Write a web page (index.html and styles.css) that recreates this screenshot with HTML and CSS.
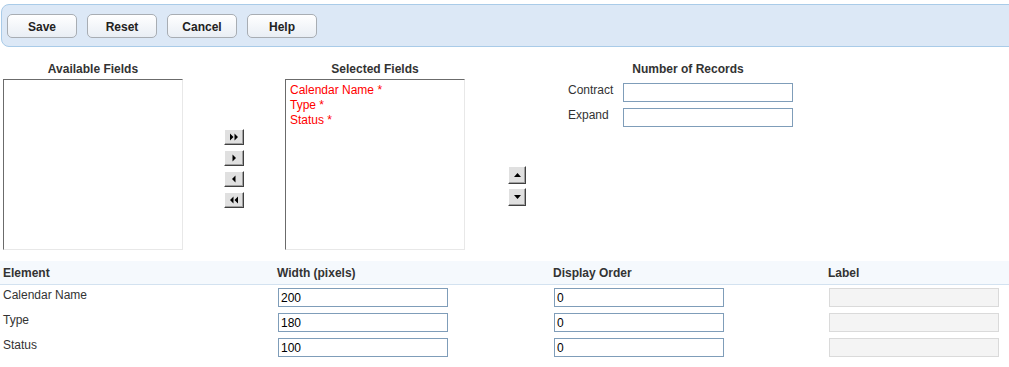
FILE: index.html
```html
<!DOCTYPE html>
<html>
<head>
  <meta charset="utf-8">
  <title>Field Layout</title>
  <link rel="stylesheet" href="styles.css">
</head>
<body>
  <div class="toolbar">
    <button class="tool-btn">Save</button>
    <button class="tool-btn">Reset</button>
    <button class="tool-btn">Cancel</button>
    <button class="tool-btn">Help</button>
  </div>

  <div class="picker">
    <div class="field-list">
      <div class="list-title">Available Fields</div>
      <div class="list-box"></div>
    </div>

    <div class="move-buttons">
      <button class="arrow-btn" title="Add all">
        <svg width="10" height="8" viewBox="0 0 10 8"><path d="M1 0.5 L4.5 4 L1 7.5 Z M5.5 0.5 L9 4 L5.5 7.5 Z" fill="#000"/></svg>
      </button>
      <button class="arrow-btn" title="Add">
        <svg width="10" height="8" viewBox="0 0 10 8"><path d="M3.5 0.5 L7 4 L3.5 7.5 Z" fill="#000"/></svg>
      </button>
      <button class="arrow-btn" title="Remove">
        <svg width="10" height="8" viewBox="0 0 10 8"><path d="M6.5 0.5 L3 4 L6.5 7.5 Z" fill="#000"/></svg>
      </button>
      <button class="arrow-btn" title="Remove all">
        <svg width="10" height="8" viewBox="0 0 10 8"><path d="M4.5 0.5 L1 4 L4.5 7.5 Z M9 0.5 L5.5 4 L9 7.5 Z" fill="#000"/></svg>
      </button>
    </div>

    <div class="field-list">
      <div class="list-title">Selected Fields</div>
      <div class="list-box selected">
        <div>Calendar Name *</div>
        <div>Type *</div>
        <div>Status *</div>
      </div>
    </div>

    <div class="order-buttons">
      <button class="order-btn" title="Up">
        <svg width="7" height="4" viewBox="0 0 7 4"><path d="M0 4 L3.5 0 L7 4 Z" fill="#000"/></svg>
      </button>
      <button class="order-btn" title="Down">
        <svg width="7" height="4" viewBox="0 0 7 4"><path d="M0 0 L3.5 4 L7 0 Z" fill="#000"/></svg>
      </button>
    </div>

    <div class="records">
      <div class="list-title">Number of Records</div>
      <div class="record-row">
        <span class="record-label">Contract</span>
        <input class="text-input" type="text">
      </div>
      <div class="record-row">
        <span class="record-label">Expand</span>
        <input class="text-input" type="text">
      </div>
    </div>
  </div>

  <table class="layout-table">
    <colgroup>
      <col class="col-element">
      <col class="col-width">
      <col class="col-order">
      <col>
    </colgroup>
    <thead>
      <tr>
        <th>Element</th>
        <th>Width (pixels)</th>
        <th>Display Order</th>
        <th>Label</th>
      </tr>
    </thead>
    <tbody>
      <tr>
        <td class="name">Calendar Name</td>
        <td><input class="text-input" type="text" value="200"></td>
        <td><input class="text-input" type="text" value="0"></td>
        <td><input class="text-input" type="text" disabled></td>
      </tr>
      <tr>
        <td class="name">Type</td>
        <td><input class="text-input" type="text" value="180"></td>
        <td><input class="text-input" type="text" value="0"></td>
        <td><input class="text-input" type="text" disabled></td>
      </tr>
      <tr>
        <td class="name">Status</td>
        <td><input class="text-input" type="text" value="100"></td>
        <td><input class="text-input" type="text" value="0"></td>
        <td><input class="text-input" type="text" disabled></td>
      </tr>
    </tbody>
  </table>
</body>
</html>
```

FILE: styles.css
```css
body {
  margin: 0;
  font-family: "Liberation Sans", Arial, sans-serif;
  font-size: 12px;
  color: #333;
  background: #fff;
  overflow: hidden;
}

/* top button bar */
.toolbar {
  display: flex;
  gap: 10px;
  height: 43px;
  box-sizing: border-box;
  margin: 4px -12px 0 1px;
  padding: 9px 0 0 5px;
  background: #dce8f6;
  border: 1px solid #a9cbe8;
  border-radius: 8px 0 0 8px;
}

.tool-btn {
  width: 70px;
  height: 24px;
  padding: 1px 0 0;
  font-family: inherit;
  font-size: 12px;
  font-weight: bold;
  color: #222;
  background: linear-gradient(#ffffff, #e9eef4);
  border: 1px solid #a8adb3;
  border-radius: 5px;
}

/* field picker */
.picker {
  display: flex;
  align-items: flex-start;
  margin: 14px 0 0 3px;
}

.list-title {
  height: 16px;
  line-height: 16px;
  margin-bottom: 2px;
  font-weight: bold;
  text-align: center;
  color: #333;
}

.list-box {
  width: 180px;
  height: 171px;
  box-sizing: border-box;
  background: #fff;
  border: 1px solid;
  border-color: #6b6b6b #e8e8e8 #e8e8e8 #6b6b6b;
}

.list-box.selected {
  padding: 3px 4px;
  line-height: 15px;
  color: #f00;
}

.move-buttons {
  display: flex;
  flex-direction: column;
  gap: 5px;
  padding-top: 68px;
  margin: 0 41px;
}

.arrow-btn,
.order-btn {
  display: flex;
  align-items: center;
  justify-content: center;
  padding: 0;
  background: #e0e0e0;
  border: 1px solid;
  border-color: #fff #404040 #404040 #fff;
  box-shadow: inset -1px -1px 0 #a0a0a0;
}

.arrow-btn {
  width: 20px;
  height: 16px;
}

.order-buttons {
  display: flex;
  flex-direction: column;
  gap: 4px;
  padding-top: 105px;
  margin-left: 43px;
}

.order-btn {
  width: 18px;
  height: 18px;
}

.records {
  width: 240px;
  margin-left: 42px;
}

.records .list-title {
  margin-bottom: 6px;
}

.record-row {
  display: flex;
  align-items: flex-start;
  margin-bottom: 6px;
}

.record-label {
  width: 55px;
  line-height: 14px;
}

.text-input {
  width: 170px;
  height: 19px;
  box-sizing: border-box;
  margin: 0;
  padding: 0 2px;
  font-family: inherit;
  font-size: 12px;
  color: #000;
  background: #fff;
  border: 1px solid #7f9db9;
  border-radius: 0;
}

.text-input:disabled {
  background: #f4f4f4;
  border-color: #dadada;
}

/* element grid */
.layout-table {
  width: 100%;
  margin-top: 11px;
  border-collapse: collapse;
  table-layout: fixed;
}

.col-element {
  width: 274px;
}

.col-width {
  width: 276px;
}

.col-order {
  width: 275px;
}

.layout-table th {
  height: 23px;
  padding: 0 0 0 3px;
  font-weight: bold;
  text-align: left;
  color: #333;
  background: #f5f9fd;
  border-bottom: 1px solid #d3e2f0;
}

.layout-table td {
  height: 19px;
  padding: 3px 0 3px 4px;
  vertical-align: top;
}

.layout-table td.name {
  padding-left: 3px;
  line-height: 14px;
}
```
